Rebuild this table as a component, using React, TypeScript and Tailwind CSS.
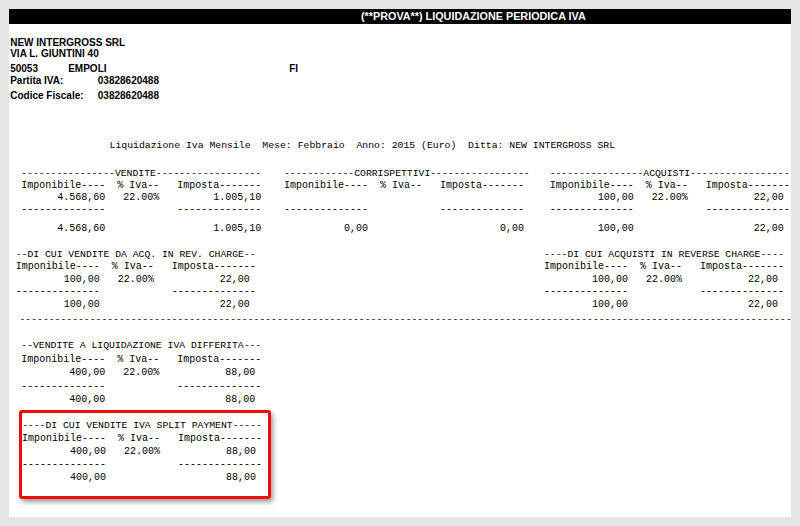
import React from 'react';

const HEAD  = 'Imponibile----  % Iva--   Imposta-------';
const DASH  = '--------------            --------------';
const BLANK = '                                        ';
const LONG  = '-'.repeat(140);

type SezProps = {
  title: string;
  values: string;
  totals: string;
  lh: string;
  totMt?: string;
  ml: string;
};

function Sezione({ title, values, totals, lh, totMt = '', ml }: SezProps) {
  return (
    <div className={`w-[240px] shrink-0 whitespace-pre ${ml}`}>
      <div className={`text-[9.75px] ${lh}`}>{title}</div>
      <div className={`text-[10px] ${lh}`}>{HEAD}</div>
      <div className={`text-[10px] ${lh}`}>{values}</div>
      <div className={`text-[10px] ${lh}`}>{DASH}</div>
      <div className={`text-[10px] ${lh} ${totMt}`}>{totals}</div>
    </div>
  );
}

export default function App() {
  return (
    <div className="min-h-screen bg-[#e5e5e5] p-[9px]">
      <div className="w-[782px] h-[508px] bg-white overflow-hidden font-['Liberation_Mono',monospace] text-black">
        {/* testata */}
        <div className="h-[15px] bg-black text-white font-bold text-[10.8px] leading-[15px] pl-[352px] whitespace-nowrap font-['Liberation_Sans',Arial,sans-serif]">
          (**PROVA**) LIQUIDAZIONE PERIODICA IVA
        </div>

        {/* anagrafica ditta */}
        <div className="font-['Liberation_Sans',Arial,sans-serif] font-bold text-[10px] text-black pl-[1.2px]">
          <div className="mt-[12.5px] h-[12px] leading-[12px]">NEW INTERGROSS SRL</div>
          <div className="mt-[-0.2px] h-[12px] leading-[12px]">VIA L. GIUNTINI 40</div>
          <div className="mt-[3px] h-[12px] leading-[12px] flex">
            <span className="w-[58px]">50053</span>
            <span className="w-[221px]">EMPOLI</span>
            <span>FI</span>
          </div>
          <div className="mt-[-0.8px] h-[12px] leading-[12px] flex">
            <span className="w-[87.6px]">Partita IVA:</span>
            <span>03828620488</span>
          </div>
          <div className="mt-[3px] h-[12px] leading-[12px] flex">
            <span className="w-[87.6px]">Codice Fiscale:</span>
            <span>03828620488</span>
          </div>
        </div>

        <div className="mt-[38.7px] pl-[100.5px] text-[9.8px] leading-[12px] whitespace-pre">
          Liquidazione Iva Mensile  Mese: Febbraio  Anno: 2015 (Euro)  Ditta: NEW INTERGROSS SRL
        </div>

        {/* vendite / corrispettivi / acquisti */}
        <div className="mt-[16px] flex">
          <Sezione ml="ml-[12.3px]" lh="leading-[11.8px]" totMt="mt-[7.2px]"
            title="----------------VENDITE------------------"
            values="      4.568,60   22.00%         1.005,10"
            totals="      4.568,60                  1.005,10" />
          <Sezione ml="ml-[22.7px]" lh="leading-[11.8px]" totMt="mt-[7.2px]"
            title="------------CORRISPETTIVI-----------------"
            values={BLANK}
            totals="          0,00                      0,00" />
          <Sezione ml="ml-[25.7px]" lh="leading-[11.8px]" totMt="mt-[7.2px]"
            title="----------------ACQUISTI------------------"
            values="        100,00   22.00%           22,00"
            totals="        100,00                    22,00" />
        </div>

        {/* reverse charge */}
        <div className="mt-[14.2px] flex">
          <Sezione ml="ml-[6.7px]" lh="leading-[12.5px]"
            title="--DI CUI VENDITE DA ACQ. IN REV. CHARGE--"
            values="        100,00   22.00%           22,00"
            totals="        100,00                    22,00" />
          <Sezione ml="ml-[288.3px]" lh="leading-[12.5px]"
            title="----DI CUI ACQUISTI IN REVERSE CHARGE----"
            values="        100,00   22.00%           22,00"
            totals="        100,00                    22,00" />
        </div>
        <div className="mt-[2.5px] pl-[10.5px] text-[9.75px] leading-[12.25px] whitespace-pre">{LONG}</div>

        {/* iva differita */}
        <div className="mt-[13.6px] flex">
          <Sezione ml="ml-[12.3px]" lh="leading-[13.4px]"
            title="--VENDITE A LIQUIDAZIONE IVA DIFFERITA---"
            values="        400,00   22.00%           88,00"
            totals="        400,00                    88,00" />
        </div>

        {/* split payment evidenziato */}
        <div className="mt-[3.7px] ml-[10px] w-[252px] h-[89px] border-[3px] border-[#f00a0a] rounded-[3px] shadow-[2px_3px_5px_rgba(0,0,0,0.4)] pt-[6.3px]">
          <Sezione ml="ml-0" lh="leading-[13px]"
            title="----DI CUI VENDITE IVA SPLIT PAYMENT-----"
            values="        400,00   22.00%           88,00"
            totals="        400,00                    88,00" />
        </div>
      </div>
    </div>
  );
}
